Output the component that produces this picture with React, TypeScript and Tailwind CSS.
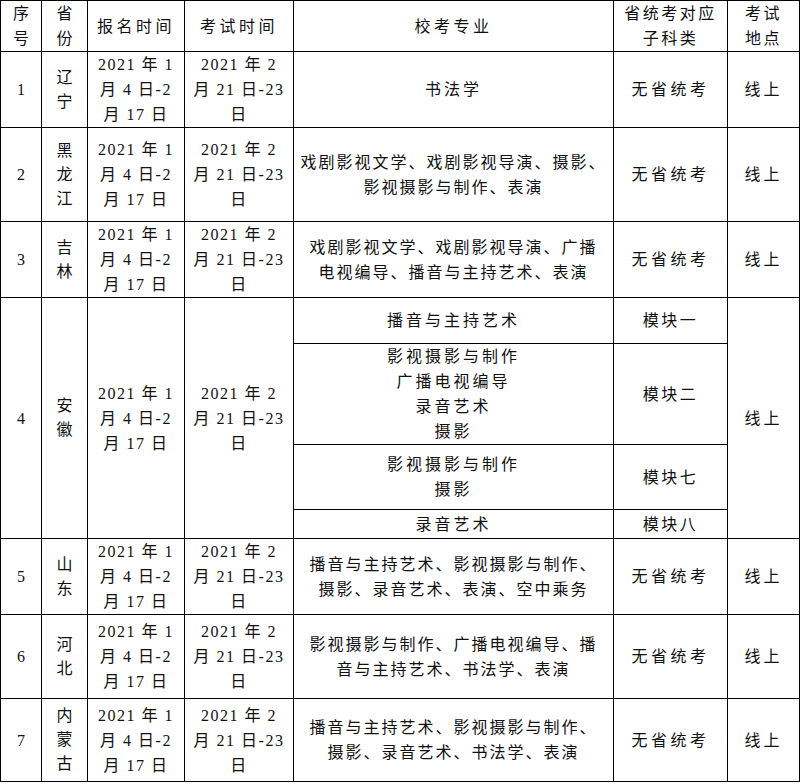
import React from 'react';

const font = '"Liberation Serif", "Noto Sans CJK SC", serif';

const reg = <>2021 年 1<br />月 4 日-2<br />月 17 日</>;
const exam = <>2021 年 2<br />月 21 日-23<br />日</>;

type Row = {
  no: string;
  prov: React.ReactNode;
  major: React.ReactNode;
  h: string;
};

const rowsTop: Row[] = [
  { no: '1', prov: <>辽<br />宁</>, major: <span className="tracking-[3px]">书法学</span>, h: 'h-[74px]' },
  {
    no: '2',
    prov: <>黑<br />龙<br />江</>,
    major: <>戏剧影视文学、戏剧影视导演、摄影、<br />影视摄影与制作、表演</>,
    h: 'h-[94px]',
  },
  {
    no: '3',
    prov: <>吉<br />林</>,
    major: <>戏剧影视文学、戏剧影视导演、广播<br />电视编导、播音与主持艺术、表演</>,
    h: 'h-[74px]',
  },
];

const rowsBottom: Row[] = [
  {
    no: '5',
    prov: <>山<br />东</>,
    major: <>播音与主持艺术、影视摄影与制作、<br />摄影、录音艺术、表演、空中乘务</>,
    h: 'h-[74px]',
  },
  {
    no: '6',
    prov: <>河<br />北</>,
    major: <>影视摄影与制作、广播电视编导、播<br />音与主持艺术、书法学、表演</>,
    h: 'h-[84px]',
  },
  {
    no: '7',
    prov: <>内<br />蒙<br />古</>,
    major: <>播音与主持艺术、影视摄影与制作、<br />摄影、录音艺术、书法学、表演</>,
    h: 'h-[83px]',
  },
];

const td = 'border border-black p-0 text-center align-middle';

function Normal({ r }: { r: Row }) {
  return (
    <tr className={r.h}>
      <td className={td}>{r.no}</td>
      <td className={`${td} leading-[24px]`}>{r.prov}</td>
      <td className={`${td} tracking-[1.5px]`}>{reg}</td>
      <td className={`${td} tracking-[1.5px]`}>{exam}</td>
      <td className={`${td} tracking-[2px]`}>{r.major}</td>
      <td className={`${td} tracking-[3.5px]`}>无省统考</td>
      <td className={`${td} tracking-[3px]`}>线上</td>
    </tr>
  );
}

export default function App() {
  return (
    <div className="bg-white w-[800px] h-[784px] text-[#111]" style={{ fontFamily: font }}>
      <table
        className="table-fixed border-collapse w-[799px] text-[16px] leading-[25px]"
        style={{ fontFamily: font }}
      >
        <colgroup>
          <col className="w-[41px]" />
          <col className="w-[46px]" />
          <col className="w-[97px]" />
          <col className="w-[109px]" />
          <col className="w-[320px]" />
          <col className="w-[114px]" />
          <col className="w-[72px]" />
        </colgroup>
        <tbody>
          <tr className="h-[50px]">
            <td className={td}>序<br />号</td>
            <td className={td}>省<br />份</td>
            <td className={`${td} tracking-[3.5px]`}>报名时间</td>
            <td className={`${td} tracking-[3.5px]`}>考试时间</td>
            <td className={`${td} tracking-[3.5px]`}>校考专业</td>
            <td className={`${td} tracking-[2.5px]`}>省统考对应<br />子科类</td>
            <td className={`${td} tracking-[2.5px]`}>考试<br />地点</td>
          </tr>
          {rowsTop.map((r) => (
            <Normal key={r.no} r={r} />
          ))}
          <tr className="h-[46px]">
            <td rowSpan={4} className={td}>4</td>
            <td rowSpan={4} className={`${td} leading-[24px]`}>安<br />徽</td>
            <td rowSpan={4} className={`${td} tracking-[1.5px]`}>{reg}</td>
            <td rowSpan={4} className={`${td} tracking-[1.5px]`}>{exam}</td>
            <td className={`${td} tracking-[3px]`}>播音与主持艺术</td>
            <td className={`${td} tracking-[2.5px]`}>模块一</td>
            <td rowSpan={4} className={`${td} tracking-[3px]`}>线上</td>
          </tr>
          <tr className="h-[99px]">
            <td className={`${td} tracking-[3px]`}>
              影视摄影与制作<br />广播电视编导<br />录音艺术<br />摄影
            </td>
            <td className={`${td} tracking-[2.5px]`}>模块二</td>
          </tr>
          <tr className="h-[65px]">
            <td className={`${td} tracking-[3px]`}>
              影视摄影与制作<br />摄影
            </td>
            <td className={`${td} tracking-[2.5px]`}>模块七</td>
          </tr>
          <tr className="h-[29px]">
            <td className={`${td} tracking-[3px]`}>录音艺术</td>
            <td className={`${td} tracking-[2.5px]`}>模块八</td>
          </tr>
          {rowsBottom.map((r) => (
            <Normal key={r.no} r={r} />
          ))}
        </tbody>
      </table>
    </div>
  );
}
